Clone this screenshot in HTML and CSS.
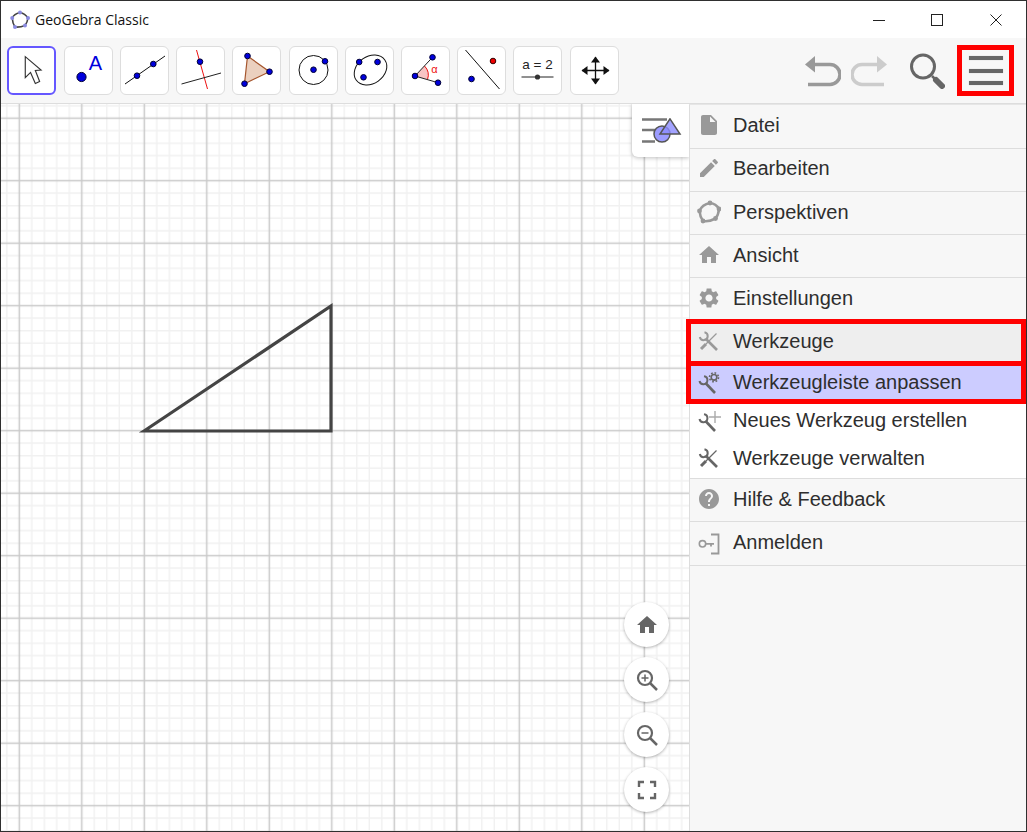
FILE: index.html
```html
<!DOCTYPE html>
<html lang="de">
<head>
    <meta charset="UTF-8">
    <title>GeoGebra Classic</title>
    <link rel="stylesheet" href="styles.css">
</head>
<body>
<div class="window">
    <div class="titlebar">
        <svg class="app-icon" width="20" height="20" viewBox="0 0 20 20">
            <path d="M2.200 8 Q4 4 10 2.500 Q15 3.500 18 8 Q17.500 12 15 15.500 Q10 17.500 5 17 Q2.500 13 2.200 8 Z" fill="none" stroke="#444" stroke-width="1.600"/>
            <circle cx="2.200" cy="8" r="2" fill="#8a8ae0"/><circle cx="10" cy="2.500" r="2" fill="#8a8ae0"/>
            <circle cx="18" cy="8" r="2" fill="#8a8ae0"/><circle cx="15" cy="15.500" r="2" fill="#8a8ae0"/>
            <circle cx="5" cy="17" r="2" fill="#8a8ae0"/>
        </svg>
        <span class="app-title">GeoGebra Classic</span>
        <div class="win-controls">
            <div class="win-btn"><svg width="12" height="12" viewBox="0 0 12 12"><path d="M0 6.500H12" stroke="#222" fill="none"/></svg></div>
            <div class="win-btn"><svg width="12" height="12" viewBox="0 0 12 12"><rect x=".5" y=".5" width="11" height="11" stroke="#222" fill="none"/></svg></div>
            <div class="win-btn"><svg width="12" height="12" viewBox="0 0 12 12"><path d="M.5 .5L11.500 11.500M11.500 .5L.5 11.500" stroke="#222" fill="none"/></svg></div>
        </div>
    </div>

    <div class="toolbar">
        <div class="tools">
            <div class="tool selected"><svg viewBox="0 0 47 47"><path d="M17 9 V31 L22.500 25.500 L27.500 37 L32 35 L27.500 23.500 L33.500 23 Z" fill="#fff" stroke="#333" stroke-width="1.200"/></svg></div>
            <div class="tool"><svg viewBox="0 0 47 47"><circle cx="16.500" cy="30" r="4.600" fill="#00d" stroke="#003"/><text x="30.500" y="23" class="t-a">A</text></svg></div>
            <div class="tool"><svg viewBox="0 0 47 47"><path d="M4 37 L44 9" stroke="#111"/><circle cx="16" cy="28.700" r="2.800" fill="#00d" stroke="#003"/><circle cx="32.300" cy="17" r="2.800" fill="#00d" stroke="#003"/></svg></div>
            <div class="tool"><svg viewBox="0 0 47 47"><path d="M19.500 3 L30.500 42" stroke="#e11"/><path d="M4.500 37 L44 26" stroke="#222"/><circle cx="23" cy="14.700" r="2.800" fill="#00d" stroke="#003"/></svg></div>
            <div class="tool"><svg viewBox="0 0 47 47"><path d="M14.500 9 L36.500 24.700 L11.500 36.700 Z" fill="#ebd0bf" stroke="#a5562e" stroke-width="1.200"/><circle cx="14.500" cy="9" r="2.800" fill="#00d" stroke="#003"/><circle cx="36.500" cy="24.700" r="2.800" fill="#00d" stroke="#003"/><circle cx="11.500" cy="36.700" r="2.800" fill="#00d" stroke="#003"/></svg></div>
            <div class="tool"><svg viewBox="0 0 47 47"><circle cx="23.500" cy="23" r="14.500" fill="none" stroke="#111"/><circle cx="23.500" cy="22.700" r="2.800" fill="#00d" stroke="#003"/><circle cx="35" cy="14.300" r="2.800" fill="#00d" stroke="#003"/></svg></div>
            <div class="tool"><svg viewBox="0 0 47 47"><ellipse cx="24.500" cy="23" rx="17.500" ry="13.500" transform="rotate(-35 24.500 23)" fill="none" stroke="#111"/><circle cx="13.200" cy="15" r="2.800" fill="#00d" stroke="#003"/><circle cx="31.500" cy="15" r="2.800" fill="#00d" stroke="#003"/><circle cx="17.500" cy="30.300" r="2.800" fill="#00d" stroke="#003"/></svg></div>
            <div class="tool"><svg viewBox="0 0 47 47"><path d="M13 29 L22.500 19 A13 13 0 0 1 25.500 32.500 Z" fill="#f8c4c4"/><path d="M22.500 19 A13 13 0 0 1 25.500 32.500" fill="none" stroke="#e11"/><path d="M30.500 10.300 L13 29 L36 35.700" fill="none" stroke="#222"/><circle cx="13" cy="29" r="2.800" fill="#00d" stroke="#003"/><circle cx="30.500" cy="10.300" r="2.800" fill="#00d" stroke="#003"/><circle cx="36" cy="35.700" r="2.800" fill="#00d" stroke="#003"/><text x="32.500" y="26" class="t-alpha">α</text></svg></div>
            <div class="tool"><svg viewBox="0 0 47 47"><path d="M7.500 3 L41.500 42" stroke="#111"/><circle cx="35" cy="14" r="2.800" fill="#e00" stroke="#300"/><circle cx="13.500" cy="32" r="2.800" fill="#00d" stroke="#003"/></svg></div>
            <div class="tool"><svg viewBox="0 0 47 47"><text x="23.500" y="21.500" class="t-eq">a = 2</text><path d="M7.500 30 H39.500" stroke="#222"/><circle cx="23.500" cy="30" r="2.600" fill="#333"/></svg></div>
            <div class="tool"><svg viewBox="0 0 47 47"><path d="M24.500 10 V37 M11 23.500 H38" stroke="#111" stroke-width="1.300"/><path d="M24.500 9.500 L29 15.500 H20 Z M24.500 37.500 L29 31.500 H20 Z M10.500 23.500 L16.500 19 V28 Z M38.500 23.500 L32.500 19 V28 Z" fill="#111"/></svg></div>
        </div>
        <div class="actions">
            <svg class="undo" width="36" height="32" viewBox="0 0 36 32"><path d="M0 9.500 L10 1 V17.500 Z" fill="#999"/><path d="M9 9.500 H25 a10 10 0 0 1 0 20 H3" fill="none" stroke="#999" stroke-width="3.600"/></svg>
            <svg class="redo" width="36" height="32" viewBox="0 0 36 32"><path d="M36 9.500 L26 1 V17.500 Z" fill="#ccc"/><path d="M27 9.500 H11 a10 10 0 0 0 0 20 H33" fill="none" stroke="#ccc" stroke-width="3.600"/></svg>
            <svg class="search" width="36" height="36" viewBox="0 0 36 36"><circle cx="14" cy="13.500" r="11.500" fill="none" stroke="#666" stroke-width="3"/><path d="M23 23 L26 26" stroke="#666" stroke-width="2.500"/><path d="M27 27 L33 33" stroke="#666" stroke-width="6" stroke-linecap="round"/></svg>
            <div class="hamburger"><span></span><span></span><span></span></div>
        </div>
    </div>

    <div class="main">
        <div class="canvas">
            <svg class="plot" width="688" height="727" viewBox="0 0 688 727">
                <defs>
                    <pattern id="grid" patternUnits="userSpaceOnUse" x="-12.950" y="-17.050" width="62.500" height="62.500">
                        <path d="M6.250 0V62.500M18.750 0V62.500M43.750 0V62.500M56.250 0V62.500M0 6.250H62.500M0 18.750H62.500M0 43.750H62.500M0 56.250H62.500" stroke="#f1f1f1" stroke-width="1.500" fill="none"/>
                        <path d="M31.250 0V62.500M0 31.250H62.500" stroke="#c9c9c9" stroke-width="1.500" fill="none"/>
                    </pattern>
                </defs>
                <rect width="688" height="727" fill="url(#grid)"/>
                <path d="M143 327 L330 202 V327 Z" fill="none" stroke="#444" stroke-width="3.200"/>
            </svg>
            <div class="style-btn">
                <svg width="42" height="30" viewBox="0 0 42 30">
                    <path d="M0 1.500H25M0 12H13M0 23.500H13" stroke="#777" stroke-width="2.500"/>
                    <circle cx="20" cy="16" r="8" fill="#9c9cff" stroke="#555" stroke-width="1.500"/>
                    <path d="M28 .8 L38 16 H18 Z" fill="#8c8cff" fill-opacity=".8" stroke="#555" stroke-width="1.500"/>
                </svg>
            </div>
            <div class="view-btns">
                <div class="view-btn"><svg width="24" height="24" viewBox="0 0 24 24"><path d="M10 20v-6h4v6h5v-8h3L12 3 2 12h3v8z" fill="#666"/></svg></div>
                <div class="view-btn"><svg width="24" height="24" viewBox="0 0 24 24"><circle cx="10" cy="10" r="7" fill="none" stroke="#666" stroke-width="2.200"/><path d="M15 15 L22 22" stroke="#666" stroke-width="2.500"/><path d="M6.500 10H13.500M10 6.500V13.500" stroke="#666" stroke-width="1.500"/></svg></div>
                <div class="view-btn"><svg width="24" height="24" viewBox="0 0 24 24"><circle cx="10" cy="10" r="7" fill="none" stroke="#666" stroke-width="2.200"/><path d="M15 15 L22 22" stroke="#666" stroke-width="2.500"/><path d="M6.500 10H13.500" stroke="#666" stroke-width="1.500"/></svg></div>
                <div class="view-btn"><svg width="24" height="24" viewBox="0 0 24 24"><path d="M4 9V4H9M15 4H20V9M20 15V20H15M9 20H4V15" fill="none" stroke="#666" stroke-width="2.400"/></svg></div>
            </div>
        </div>

        <div class="menu">
            <div class="row high">
                <svg class="ico" viewBox="0 0 24 24"><path d="M6 2c-1.100 0-1.990.9-1.990 2L4 20c0 1.100.89 2 1.990 2H18c1.100 0 2-.9 2-2V8l-6-6H6zm7 7V3.500L18.500 9H13z"/></svg>
                Datei
            </div>
            <div class="row high">
                <svg class="ico" viewBox="0 0 24 24"><path d="M3 17.250V21h3.750L17.810 9.940l-3.750-3.750L3 17.250zM20.710 7.040c.39-.39.39-1.020 0-1.410l-2.340-2.340c-.39-.39-1.020-.39-1.410 0l-1.830 1.830 3.750 3.750 1.830-1.830z"/></svg>
                Bearbeiten
            </div>
            <div class="row">
                <svg class="ico" viewBox="0 0 24 24"><path d="M2.500 11 Q5 4.500 13 3 Q19 3.500 22 9 Q21.500 15 18.500 18.500 Q12 22 6 21 Q3 17 2.500 11 Z" fill="none" stroke="#999" stroke-width="2.600"/><circle cx="2.500" cy="11" r="2.400"/><circle cx="13" cy="3" r="2.400"/><circle cx="22" cy="9" r="2.400"/><circle cx="18.500" cy="18.500" r="2.400"/><circle cx="6" cy="21" r="2.400"/></svg>
                Perspektiven
            </div>
            <div class="row">
                <svg class="ico" viewBox="0 0 24 24"><path d="M10 20v-6h4v6h5v-8h3L12 3 2 12h3v8z"/></svg>
                Ansicht
            </div>
            <div class="row">
                <svg class="ico" viewBox="0 0 24 24"><path d="M19.140 12.940c.04-.3.06-.61.06-.94 0-.32-.02-.64-.07-.94l2.030-1.580c.18-.14.23-.41.12-.61l-1.920-3.320c-.12-.22-.37-.29-.59-.22l-2.390.96c-.5-.38-1.030-.7-1.620-.94l-.36-2.540c-.04-.24-.24-.41-.48-.41h-3.840c-.24 0-.43.17-.47.41l-.36 2.540c-.59.24-1.130.57-1.620.94l-2.390-.96c-.22-.08-.47 0-.59.22L2.740 8.870c-.12.21-.08.47.12.61l2.030 1.580c-.05.3-.09.63-.09.94s.02.64.07.94l-2.030 1.580c-.18.14-.23.41-.12.61l1.920 3.320c.12.22.37.29.59.22l2.390-.96c.5.38 1.030.7 1.620.94l.36 2.540c.05.24.24.41.48.41h3.840c.24 0 .44-.17.47-.41l.36-2.540c.59-.24 1.130-.56 1.620-.94l2.390.96c.22.08.47 0 .59-.22l1.920-3.320c.12-.22.07-.47-.12-.61l-2.010-1.580zM12 15.600c-1.980 0-3.600-1.620-3.600-3.600s1.620-3.600 3.600-3.600 3.600 1.620 3.600 3.600-1.620 3.600-3.600 3.600z"/></svg>
                Einstellungen
            </div>
            <div class="row open marked">
                <svg class="ico tools-ico light" viewBox="0 0 24 24"><path d="M7.500 3.200 A4 4 0 1 1 2.800 8" stroke-width="2"/><path d="M9 10 L20 21" stroke-width="2.600"/><path d="M19.500 4.500 L9 15" stroke-width="1.300"/><path d="M9 15 L4 20" stroke-width="3"/></svg>
                Werkzeuge
            </div>
            <div class="sub">
                <div class="subrow active marked-sub">
                    <svg class="ico tools-ico" viewBox="0 0 24 24"><path d="M7 6.200 A4 4 0 1 1 2.500 11" stroke-width="2"/><path d="M8.500 13 L18 23" stroke-width="2.600"/><circle cx="17" cy="7.300" r="2.800" stroke-width="1.600"/><circle cx="17" cy="7.300" r="4.500" stroke-width="1.600" stroke-dasharray="1.700 1.830"/></svg>
                    Werkzeugleiste anpassen
                </div>
                <div class="subrow">
                    <svg class="ico tools-ico" viewBox="0 0 24 24"><path d="M7 6.200 A4 4 0 1 1 2.500 11" stroke-width="2"/><path d="M8.500 13 L18 23" stroke-width="2.600"/><path d="M18 3V15M12 9H24" stroke="#aaa" stroke-width="1.400"/></svg>
                    Neues Werkzeug erstellen
                </div>
                <div class="subrow">
                    <svg class="ico tools-ico" viewBox="0 0 24 24"><path d="M7.500 3.200 A4 4 0 1 1 2.800 8" stroke-width="2"/><path d="M9 10 L20 21" stroke-width="2.600"/><path d="M19.500 4.500 L9 15" stroke-width="1.300"/><path d="M9 15 L4 20" stroke-width="3"/></svg>
                    Werkzeuge verwalten
                </div>
            </div>
            <div class="row">
                <svg class="ico" viewBox="0 0 24 24"><path d="M12 2C6.480 2 2 6.480 2 12s4.480 10 10 10 10-4.480 10-10S17.520 2 12 2zm1 17h-2v-2h2v2zm2.070-7.750l-.9.920C13.450 12.900 13 13.500 13 15h-2v-.5c0-1.100.45-2.100 1.170-2.830l1.240-1.260c.37-.36.59-.86.59-1.410 0-1.100-.9-2-2-2s-2 .9-2 2H8c0-2.210 1.790-4 4-4s4 1.790 4 4c0 .88-.36 1.680-.93 2.250z"/></svg>
                Hilfe &amp; Feedback
            </div>
            <div class="row last">
                <svg class="ico" viewBox="0 0 24 24"><circle cx="5.500" cy="12.800" r="3.200" fill="none" stroke="#999" stroke-width="1.600"/><path d="M8.700 12.800H17M14 3.500H21.500V22.500H14M14 12.800V15.500" fill="none" stroke="#999" stroke-width="1.800"/></svg>
                Anmelden
            </div>
        </div>
    </div>
</div>
</body>
</html>
```

FILE: styles.css
```css
* {
    box-sizing: border-box;
}
body {
    margin: 0;
    font-family: "Liberation Sans", Arial, sans-serif;
    color: #2e2e2e;
    background: white;
}
.window {
    width: 1027px;
    height: 832px;
    border: 1px solid #2f2f2f;
    display: flex;
    flex-direction: column;
    overflow: hidden;
}

/* title bar */
.titlebar {
    height: 37px;
    flex: none;
    display: flex;
    align-items: center;
    padding: 0 1px 0 9px;
    background: white;
}
.app-icon {
    margin-right: 5px;
}
.app-title {
    font-family: "Open Sans", sans-serif;
    font-size: 14px;
    color: #111;
}
.win-controls {
    margin-left: auto;
    display: flex;
}
.win-btn {
    width: 58.5px;
    height: 37px;
    display: flex;
    align-items: center;
    justify-content: center;
}

/* toolbar */
.toolbar {
    height: 66px;
    flex: none;
    display: flex;
    align-items: center;
    background: #f7f7f7;
    border-bottom: 1px solid #ddd;
    padding-left: 6px;
}
.tools {
    display: flex;
    gap: 7.2px;
}
.tool {
    width: 49px;
    height: 49px;
    background: white;
    border: 1px solid #ddd;
    border-radius: 6px;
}
.tool svg {
    display: block;
    width: 47px;
    height: 47px;
    fill: none;
}
.tool.selected {
    border: 2px solid #6557ff;
    margin-right: 0.65px;
}
.tool.selected svg {
    width: 45px;
    height: 45px;
}
.t-a {
    font-size: 20px;
    fill: #00d;
    stroke: none;
    text-anchor: middle;
}
.t-alpha {
    font-size: 11px;
    fill: #e11;
    stroke: none;
    text-anchor: middle;
}
.t-eq {
    font-size: 13.5px;
    fill: #222;
    stroke: none;
    text-anchor: middle;
}
.actions {
    margin-left: auto;
    display: flex;
    align-items: center;
    padding-right: 12px;
}
.undo {
    margin-right: 10px;
}
.redo {
    margin-right: 22px;
}
.search {
    margin-right: 12px;
}
.hamburger {
    width: 57px;
    height: 51px;
    border: 5px solid red;
    display: flex;
    flex-direction: column;
    justify-content: center;
    align-items: center;
    gap: 8.5px;
}
.hamburger span {
    display: block;
    width: 34px;
    height: 4px;
    background: #666;
    box-shadow: 0 0 1px #aaa;
}

/* graphics view */
.main {
    flex: 1;
    display: flex;
    min-height: 0;
}
.canvas {
    position: relative;
    width: 688px;
    flex: none;
    background: white;
    overflow: hidden;
}
.plot {
    display: block;
}
.style-btn {
    position: absolute;
    top: 0;
    right: 0;
    width: 57px;
    height: 53px;
    background: white;
    border-bottom-left-radius: 6px;
    box-shadow: 0 1px 4px rgba(0, 0, 0, 0.25);
    padding: 14px 0 0 10px;
}
.style-btn svg {
    display: block;
}
.view-btns {
    position: absolute;
    right: 20px;
    bottom: 19px;
    display: flex;
    flex-direction: column;
    gap: 10px;
}
.view-btn {
    width: 45px;
    height: 45px;
    border-radius: 50%;
    background: white;
    box-shadow: 0 1px 3px rgba(0, 0, 0, 0.3);
    display: flex;
    align-items: center;
    justify-content: center;
}

/* side menu */
.menu {
    flex: 1;
    background: #f7f7f7;
    border-left: 1px solid #ddd;
    border-top: 1px solid #e6e6e6;
    padding-top: 1px;
    font-size: 20px;
}
.row,
.subrow {
    position: relative;
    display: flex;
    align-items: center;
    padding-left: 6.5px;
}
.row {
    height: 43px;
    padding-bottom: 2px;
    border-bottom: 1px solid #ddd;
}
.row.high {
    padding-bottom: 4px;
}
.row.last {
    height: 44px;
}
.subrow {
    height: 38px;
}
.sub {
    background: white;
    border-bottom: 1px solid #ddd;
    padding-bottom: 1px;
}
.ico {
    width: 24px;
    height: 24px;
    margin-right: 12.5px;
    flex: none;
    fill: #999;
}
.tools-ico {
    fill: none;
    stroke: #666;
}
.tools-ico.light {
    stroke: #999;
}
.row.open {
    height: 42px;
    background: #eee;
    border-bottom: none;
    padding-bottom: 2px;
}
.subrow.active {
    background: #ccf;
}

/* red annotation frames */
.marked::after,
.marked-sub::after {
    content: "";
    position: absolute;
    left: -4px;
    right: 0;
    border: 5px solid red;
}
.marked::after {
    top: -2px;
    bottom: -3px;
}
.marked-sub::after {
    top: -2px;
    bottom: -3px;
}
```
